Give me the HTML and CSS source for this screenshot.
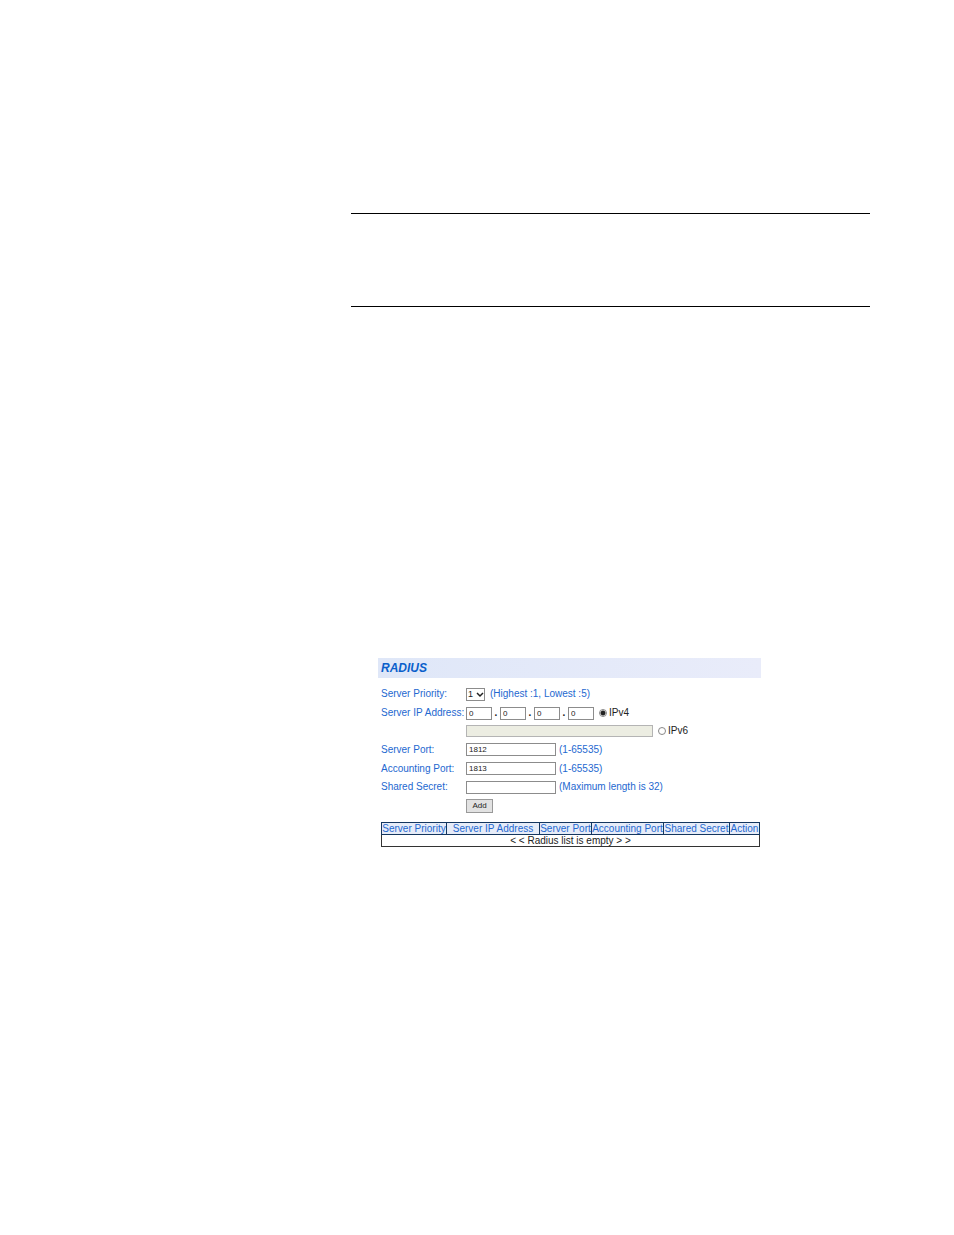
FILE: index.html
```
<!DOCTYPE html>
<html lang="en">
<head>
  <meta charset="UTF-8">
  <title>RADIUS</title>
  <link rel="stylesheet" href="styles.css">
</head>
<body>
  <main>
    <div class="note"></div>

    <section class="radius">
      <h1>RADIUS</h1>

      <form>
        <div class="row priority">
          <label class="name" for="priority">Server Priority:</label>
          <span class="select-box">
            <select id="priority">
              <option>1</option>
              <option>2</option>
              <option>3</option>
              <option>4</option>
              <option>5</option>
            </select>
            <svg class="arrow" viewBox="0 0 8 6"><path d="M1 1l3 3 3-3"/></svg>
          </span>
          <span class="hint">(Highest :1, Lowest :5)</span>
        </div>
        <div class="row">
          <label class="name" for="ip1">Server IP Address:</label>
          <span class="ip">
            <input type="text" id="ip1" value="0"><b>.</b>
            <input type="text" aria-label="IP part 2" value="0"><b>.</b>
            <input type="text" aria-label="IP part 3" value="0"><b>.</b>
            <input type="text" aria-label="IP part 4" value="0">
          </span>
          <label class="version"><input type="radio" name="version" checked>IPv4</label>
        </div>
        <div class="row">
          <span class="name"></span>
          <input type="text" class="ipv6" aria-label="IPv6 address" disabled>
          <label class="version"><input type="radio" name="version">IPv6</label>
        </div>
        <div class="row server">
          <label class="name" for="port">Server Port:</label>
          <input type="text" class="field" id="port" value="1812">
          <span>(1-65535)</span>
        </div>
        <div class="row server">
          <label class="name" for="accounting">Accounting Port:</label>
          <input type="text" class="field" id="accounting" value="1813">
          <span>(1-65535)</span>
        </div>
        <div class="row">
          <label class="name" for="secret">Shared Secret:</label>
          <input type="text" class="field" id="secret">
          <span>(Maximum length is 32)</span>
        </div>
        <div class="row server">
          <span class="name"></span>
          <button type="button">Add</button>
        </div>
      </form>

      <table>
        <thead>
          <tr>
            <th class="c-priority">Server Priority</th>
            <th>Server IP Address</th>
            <th class="c-port">Server Port</th>
            <th class="c-accounting">Accounting Port</th>
            <th class="c-secret">Shared Secret</th>
            <th class="c-action">Action</th>
          </tr>
        </thead>
        <tbody>
          <tr>
            <td colspan="6">&lt; &lt; Radius list is empty &gt; &gt;</td>
          </tr>
        </tbody>
      </table>
    </section>
  </main>
</body>
</html>
```
FILE: styles.css
```
* {
  box-sizing: border-box;
}
body {
  margin: 0;
  background: white;
  color: #222;
  font-family: "Liberation Sans", Arial, sans-serif;
  font-size: 10px;
  line-height: 12px;
}
main {
  margin: 213px 84px 0 351px;
}
.note {
  height: 94px;
  border-top: 1px solid black;
  border-bottom: 1px solid black;
}
.radius {
  max-width: 383px;
  margin: 351px 0 0 27px;
}
h1 {
  margin: 0 0 6px;
  padding: 0 3px;
  background: linear-gradient(to right, #dfe7f8, #e9ecfa);
  color: #0a5fcb;
  font-size: 12px;
  font-style: italic;
  line-height: 20px;
}
form {
  padding-left: 3px;
  color: #2468d0;
}
.row {
  display: flex;
  align-items: center;
  gap: 3px;
  height: 18px;
  white-space: nowrap;
}
.priority {
  height: 20px;
}
.server {
  height: 19px;
}
.name {
  width: 82px;
}
input[type="text"], select {
  height: 13px;
  margin: 0;
  padding: 0 4px 0 2px;
  border: 1px solid #8c8c8c;
  border-radius: 0;
  background: white;
  color: #222;
  font-family: inherit;
  font-size: 8px;
}
.select-box {
  position: relative;
  display: flex;
}
select {
  width: 19px;
  padding: 0 1px;
  appearance: none;
  font-size: 9px;
}
.arrow {
  position: absolute;
  top: 4px;
  right: 1px;
  width: 8px;
  height: 6px;
  fill: none;
  stroke: #222;
  stroke-width: 1.5;
  pointer-events: none;
}
.hint {
  margin-left: 2px;
}
.ip {
  display: flex;
  align-items: center;
}
.ip input {
  width: 26px;
}
.ip b {
  width: 8px;
  color: #222;
  text-align: center;
}
.version {
  display: flex;
  align-items: center;
  gap: 2px;
  margin-left: 2px;
  color: #222;
}
input[type="radio"] {
  width: 8px;
  height: 8px;
  margin: 0;
  appearance: none;
  border: 1px solid #888;
  border-radius: 50%;
  background: white;
}
input[type="radio"]:checked {
  background: radial-gradient(circle, #222 2px, white 3px);
}
.row .ipv6 {
  width: 187px;
  height: 12px;
  border-color: #b4b4b4;
  background: #ecede2;
}
.field {
  width: 90px;
}
button {
  width: 27px;
  height: 14px;
  padding: 0;
  border: 1px solid #999;
  background: #e2e2e2;
  color: #222;
  font-family: inherit;
  font-size: 8px;
}
table {
  width: 379px;
  margin: 7px 0 0 3px;
  border: 1px solid #333;
  border-collapse: collapse;
  table-layout: fixed;
}
th, td {
  height: 12px;
  padding: 0;
  border: 1px solid #333;
  line-height: 11px;
  text-align: center;
  white-space: nowrap;
}
th {
  border-color: #14365f;
  background: #e6ecf8;
  color: #2468d0;
  font-weight: normal;
}
.c-priority {
  width: 65px;
}
.c-port {
  width: 52px;
}
.c-accounting {
  width: 72px;
}
.c-secret {
  width: 66px;
}
.c-action {
  width: 30px;
}
```
